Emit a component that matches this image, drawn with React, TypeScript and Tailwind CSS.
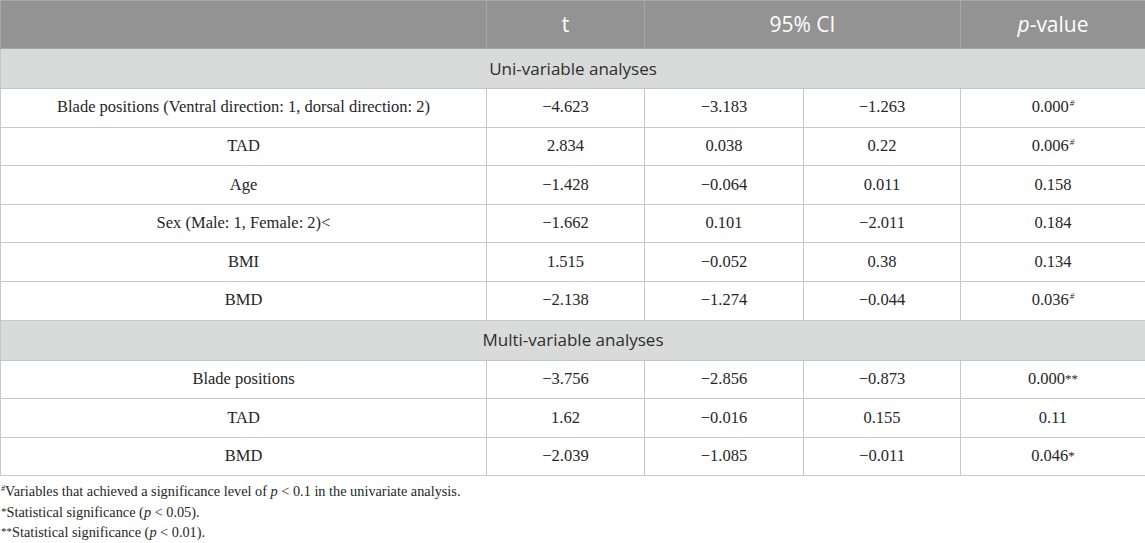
import React from "react";

const serif = { fontFamily: '"Liberation Serif", "Times New Roman", serif' };

type Row = { label: string; t: string; lo: string; hi: string; p: string; sup?: string };

const uni: Row[] = [
  { label: "Blade positions (Ventral direction: 1, dorsal direction: 2)", t: "\u22124.623", lo: "\u22123.183", hi: "\u22121.263", p: "0.000", sup: "#" },
  { label: "TAD", t: "2.834", lo: "0.038", hi: "0.22", p: "0.006", sup: "#" },
  { label: "Age", t: "\u22121.428", lo: "\u22120.064", hi: "0.011", p: "0.158" },
  { label: "Sex (Male: 1, Female: 2)<", t: "\u22121.662", lo: "0.101", hi: "\u22122.011", p: "0.184" },
  { label: "BMI", t: "1.515", lo: "\u22120.052", hi: "0.38", p: "0.134" },
  { label: "BMD", t: "\u22122.138", lo: "\u22121.274", hi: "\u22120.044", p: "0.036", sup: "#" },
];

const multi: Row[] = [
  { label: "Blade positions", t: "\u22123.756", lo: "\u22122.856", hi: "\u22120.873", p: "0.000", sup: "**" },
  { label: "TAD", t: "1.62", lo: "\u22120.016", hi: "0.155", p: "0.11" },
  { label: "BMD", t: "\u22122.039", lo: "\u22121.085", hi: "\u22120.011", p: "0.046", sup: "*" },
];

function Mark({ s }: { s: string }) {
  if (s === "#") {
    return <span className="text-[9px] italic relative -top-[6px] ml-[1px]">#</span>;
  }
  return <span className="text-[13px] relative -top-[1px]">{s}</span>;
}

function DataRow({ r }: { r: Row }) {
  const td = "border border-[#c9c9c9] text-center h-[38.6px] p-0 align-middle";
  return (
    <tr style={serif} className="text-[16.5px] text-[#262626]">
      <td className={td}>{r.label}</td>
      <td className={td}>{r.t}</td>
      <td className={td}>{r.lo}</td>
      <td className={td}>{r.hi}</td>
      <td className={td}>
        {r.p}
        {r.sup && <Mark s={r.sup} />}
      </td>
    </tr>
  );
}

function Section({ title }: { title: string }) {
  return (
    <tr>
      <td
        colSpan={5}
        className="bg-[#d9dbda] border border-[#c6c6c6] text-center h-[40px] p-0 text-[17px] text-[#2e2e2e]"
        style={{ fontFamily: '"Open Sans", sans-serif' }}
      >
        {title}
      </td>
    </tr>
  );
}

export default function App() {
  const th = "bg-[#939393] border border-[#a6a6a6] text-center font-normal text-[21px] text-white h-[48px] p-0";
  return (
    <div className="w-[1145px] h-[543px] bg-white overflow-hidden">
      <table className="w-[1145px] border-collapse table-fixed">
        <colgroup>
          <col className="w-[486px]" />
          <col className="w-[158px]" />
          <col className="w-[159px]" />
          <col className="w-[157px]" />
          <col className="w-[185px]" />
        </colgroup>
        <thead>
          <tr style={{ fontFamily: '"Open Sans", sans-serif' }}>
            <th className={th}></th>
            <th className={th}>t</th>
            <th className={th} colSpan={2}>95% CI</th>
            <th className={th}>
              <span className="italic">p</span>-value
            </th>
          </tr>
        </thead>
        <tbody>
          <Section title="Uni-variable analyses" />
          {uni.map((r, i) => (
            <DataRow key={i} r={r} />
          ))}
          <Section title="Multi-variable analyses" />
          {multi.map((r, i) => (
            <DataRow key={i} r={r} />
          ))}
        </tbody>
      </table>
      <div style={serif} className="text-[14.3px] leading-[19px] text-[#262626] pt-[6px] pl-[1px]">
        <div>
          <span className="text-[8px] italic relative -top-[5px]">#</span>Variables that achieved a significance level of <span className="italic">p</span> &lt; 0.1 in the univariate analysis.
        </div>
        <div>
          <span className="text-[11px] relative -top-[2px]">*</span>Statistical significance (<span className="italic">p</span> &lt; 0.05).
        </div>
        <div>
          <span className="text-[11px] relative -top-[2px]">**</span>Statistical significance (<span className="italic">p</span> &lt; 0.01).
        </div>
      </div>
    </div>
  );
}
